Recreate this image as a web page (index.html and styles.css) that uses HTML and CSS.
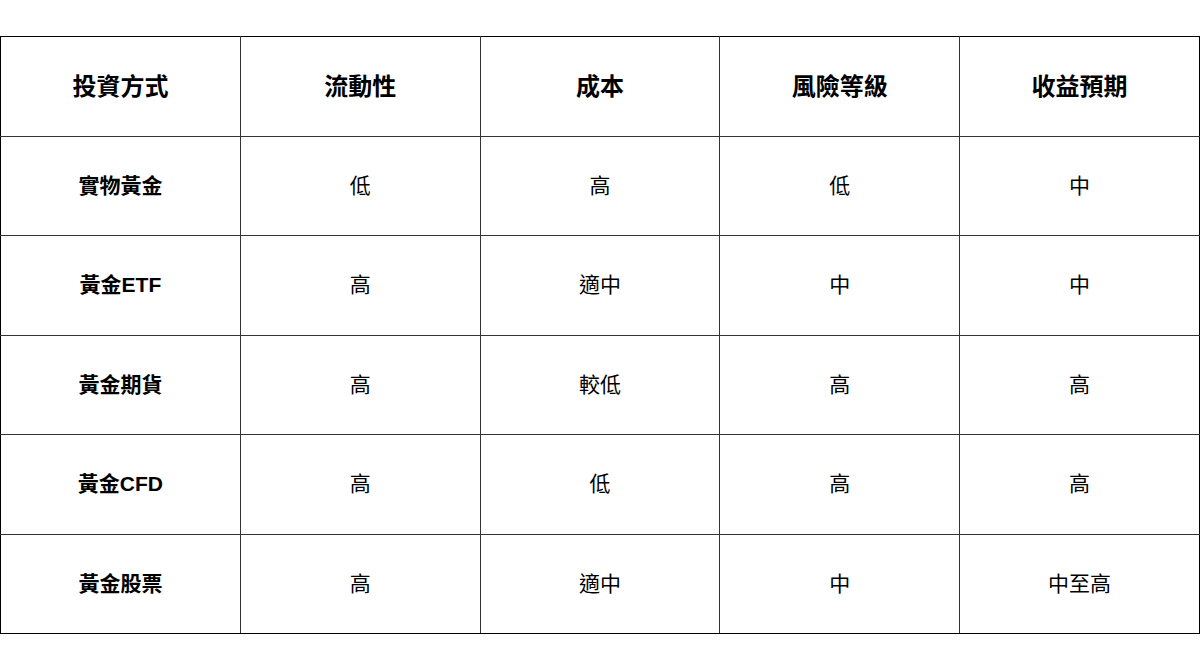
FILE: index.html
```html
<!DOCTYPE html>
<html lang="zh-Hant">
<head>
<meta charset="utf-8">
<link rel="stylesheet" href="styles.css">
</head>
<body>
<table class="compare">
  <colgroup>
    <col class="c"><col class="c"><col class="c"><col class="c"><col class="c">
  </colgroup>
  <thead>
    <tr><th>投資方式</th><th>流動性</th><th>成本</th><th>風險等級</th><th>收益預期</th></tr>
  </thead>
  <tbody>
    <tr><td class="name">實物黃金</td><td>低</td><td>高</td><td>低</td><td>中</td></tr>
    <tr><td class="name">黃金ETF</td><td>高</td><td>適中</td><td>中</td><td>中</td></tr>
    <tr><td class="name">黃金期貨</td><td>高</td><td>較低</td><td>高</td><td>高</td></tr>
    <tr><td class="name">黃金CFD</td><td>高</td><td>低</td><td>高</td><td>高</td></tr>
    <tr><td class="name">黃金股票</td><td>高</td><td>適中</td><td>中</td><td>中至高</td></tr>
  </tbody>
</table>
</body>
</html>
```
FILE: styles.css
```css
html, body {
  margin: 0;
  padding: 0;
  background: #fff;
}
body {
  padding-top: 36px;
  font-family: "Liberation Sans", "Noto Sans CJK TC", sans-serif;
  color: #000;
}
.compare {
  width: 1200px;
  border-collapse: collapse;
  table-layout: fixed;
}
.compare col.c {
  width: 20%;
}
.compare tr {
  height: 99.5px;
}
.compare th,
.compare td {
  border: 1px solid #333;
  text-align: center;
  vertical-align: middle;
  padding: 0 0 4px;
}
.compare th {
  font-size: 24px;
  font-weight: 700;
}
.compare td {
  font-size: 21px;
  font-weight: 400;
}
.compare td.name {
  font-weight: 700;
}
.compare thead th {
  border-top-color: #000;
}
.compare tbody tr:last-child td {
  border-bottom-color: #000;
}
.compare th:first-child,
.compare td:first-child {
  border-left-color: #000;
}
.compare th:last-child,
.compare td:last-child {
  border-right-color: #000;
}
```
